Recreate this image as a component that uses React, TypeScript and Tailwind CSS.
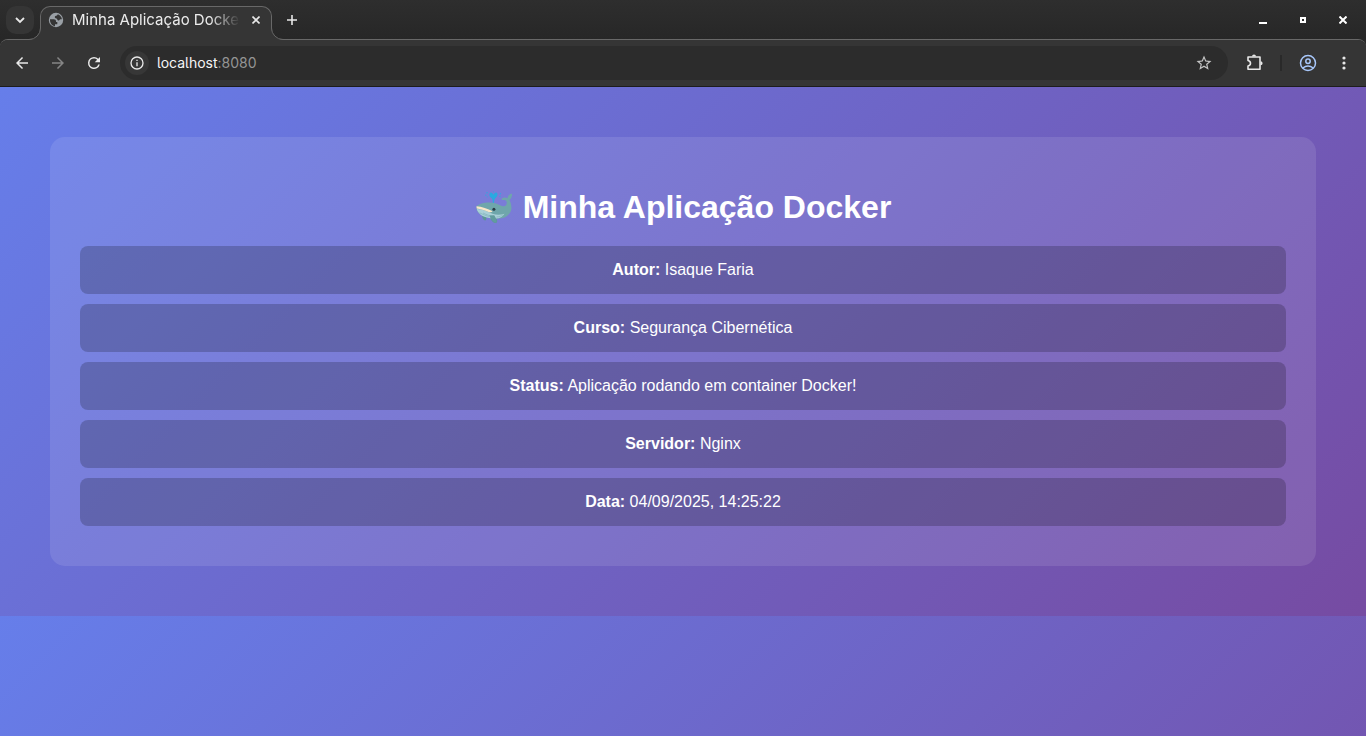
import React from "react";

const details = [
  { label: "Autor", value: "Isaque Faria" },
  { label: "Curso", value: "Segurança Cibernética" },
  { label: "Status", value: "Aplicação rodando em container Docker!" },
  { label: "Servidor", value: "Nginx" },
  { label: "Data", value: "04/09/2025, 14:25:22" },
];

type GlyphProps = { d: string; className?: string };

function Glyph({ d, className = "size-5" }: GlyphProps) {
  return (
    <svg viewBox="0 0 24 24" className={className} fill="currentColor" aria-hidden="true">
      <path d={d} />
    </svg>
  );
}

type IconButtonProps = { label: string; className?: string; children: React.ReactNode };

function IconButton({ label, className = "", children }: IconButtonProps) {
  return (
    <button type="button" aria-label={label} className={`flex shrink-0 items-center justify-center ${className}`}>
      {children}
    </button>
  );
}

function Whale() {
  return (
    <svg viewBox="0 0 40 36" className="h-9 w-10 shrink-0" role="img" aria-label="Baleia">
      <path d="M17.900 14.500C18 11 17.500 9.800 15.500 8.300C14 7 14 4 15.700 3.600C17 3.500 18 4.600 18.500 5.800C19 4.600 20 3.400 21.300 3.600C23 4 22.900 7 21.300 8.200C19.400 9.800 19 11 19 14.500Z" fill="#29a9e0" />
      <g fill="#35a5df">
        <circle cx="12" cy="3.800" r="0.800" />
        <circle cx="10.800" cy="6.300" r="0.700" />
        <circle cx="12.300" cy="7.800" r="0.600" />
        <circle cx="24.900" cy="7.500" r="0.700" />
        <circle cx="25.400" cy="4.800" r="0.700" />
        <circle cx="18.500" cy="2.800" r="0.600" />
      </g>
      <path d="M14 25C14.500 28.500 16.300 32.500 19.300 33.800C21.200 34.600 22.400 33.400 22.100 31.800C21.700 29.800 21 28 20 26Z" fill="#5b9597" />
      <path d="M7.300 26.500C7 29 8.200 31 9.900 31.500C11.300 31.600 11.500 29.500 11.300 28Z" fill="#5b9597" />
      <path d="M1.500 17.300C4 14.500 9.500 13.300 15.500 13.500C21 13.700 25 16.600 28.200 17.200C30.800 17.500 32 15.500 31.700 13.200C31.400 11.400 30 11 28.300 11.100C27 11.100 26 10.400 26.800 9.600C28.300 8.400 31 8.300 32.500 9.300C32.600 7.100 34.100 5.100 36.300 4.700C37.200 4.600 37.200 5.400 37 6.200C36.400 8.400 36.200 9.900 34.500 10.900C36.200 14.500 37.300 18.800 35.700 22.400C33.500 27.200 29 29.600 23.500 29.600C17 29.600 7 28.500 3.300 23.400C1.800 21.400.9 19 1.500 17.300Z" fill="#6fa6ab" />
      <path d="M1.900 20C8 20.200 13 22.800 17.500 24.800C21.500 26.300 26 26 29.500 24.700C27.500 28 24.500 29.600 20.500 29.500C14 29.400 7.300 28.300 4 24C2.600 22.300 1.900 21.300 1.900 20Z" fill="#a9d0d8" />
      <path d="M4.500 23.800C9 25.900 13 27.600 17.500 28.300M8 24C12 26 15.500 27.200 19.500 27.400M21.500 28C24 27.900 26 27 28 25.800" fill="none" stroke="#86b7bf" strokeWidth="0.800" />
      <path d="M14.500 26.500C15.300 29 17 32.300 19.500 33.500C21 34.200 22 33.200 21.700 31.800C21.300 29.700 20.200 27.800 19.200 26.200Z" fill="#629c9e" />
      <path d="M1.500 17.300C6.500 17.500 13 19.800 17.600 22.300C16.800 23.400 15.200 23.500 13.600 23C9.500 21.200 5 20.200 1.700 19.600Z" fill="#fae7c8" />
      <circle cx="18.900" cy="20.300" r="1.500" fill="#263b45" />
    </svg>
  );
}

function TabStrip() {
  return (
    <div className="flex h-[39px] items-start bg-linear-to-b from-[#2e2e2e] to-[#272727] pl-1.5 text-[#e8e8e8]">
      <IconButton label="Pesquisar guias" className="mt-1.5 size-7 rounded-[10px] bg-[#353535]">
        <svg viewBox="0 0 10 10" className="size-2.5" aria-hidden="true">
          <path d="M1 3L5 7L9 3" fill="none" stroke="currentColor" strokeWidth="1.800" />
        </svg>
      </IconButton>
      <div className="relative z-10 ml-1.5 mt-1.5 flex h-[34px] w-[232px] items-start rounded-t-[10px] border border-b-0 border-[#686868] bg-[#353535] pl-[7px]">
        <svg viewBox="0 0 12 12" className="absolute -left-3 bottom-0 size-3" aria-hidden="true">
          <path d="M12 0V12H0V11.500A11.500 11.500 0 0 0 11.500 0Z" fill="#353535" />
          <path d="M0 11.500A11.500 11.500 0 0 0 11.500 0" fill="none" stroke="#686868" />
        </svg>
        <svg viewBox="0 0 12 12" className="absolute -right-3 bottom-0 size-3" aria-hidden="true">
          <path d="M0 0V12H12V11.500A11.500 11.500 0 0 1 .5 0Z" fill="#353535" />
          <path d="M12 11.500A11.500 11.500 0 0 1 .5 0" fill="none" stroke="#686868" />
        </svg>
        <svg viewBox="0 0 16 16" className="mt-[5px] size-4 shrink-0" aria-hidden="true">
          <circle cx="8" cy="8" r="7.200" fill="#9aa0a6" />
          <path d="M2 7.200H5.800C7.300 7.200 8 8 8 9.200V10H9.300V12.300H7V14.300C4.300 13.800 2 11.200 2 8ZM9.800 2.300C12 3 13.600 5 13.900 7.200H12.500C11.500 7.200 11.400 8.600 10.300 8.600C9.200 8.600 9.600 6.900 8.500 6.500C7.200 6.100 6.500 5.500 6.900 4.500C7.200 3.700 9.300 3.900 9.800 2.300Z" fill="#353535" />
        </svg>
        <span className="ml-2 mt-[3px] w-[168px] overflow-hidden whitespace-nowrap text-[15px] leading-5 text-[#ececec] [mask-image:linear-gradient(to_right,black_82%,transparent)]">
          Minha Aplicação Docker
        </span>
        <IconButton label="Fechar guia" className="ml-2 mt-[5px] size-4">
          <svg viewBox="0 0 8 8" className="size-2" aria-hidden="true">
            <path d="M.5.5L7.500 7.500M7.500.5L.5 7.500" stroke="currentColor" strokeWidth="1.600" />
          </svg>
        </IconButton>
      </div>
      <IconButton label="Nova guia" className="ml-1.5 mt-1.5 size-7">
        <svg viewBox="0 0 10 10" className="size-2.5" aria-hidden="true">
          <path d="M5 0V10M0 5H10" stroke="currentColor" strokeWidth="1.600" />
        </svg>
      </IconButton>
      <div className="ml-auto mt-2.5 mr-[13px] flex gap-5 text-white">
        <IconButton label="Minimizar" className="size-5">
          <svg viewBox="0 0 10 10" className="size-2.5" aria-hidden="true">
            <path d="M1 7H9V9H1Z" fill="currentColor" />
          </svg>
        </IconButton>
        <IconButton label="Maximizar" className="size-5">
          <svg viewBox="0 0 6 6" className="size-1.5" aria-hidden="true">
            <path d="M1 1H5V5H1Z" fill="none" stroke="currentColor" strokeWidth="2" />
          </svg>
        </IconButton>
        <IconButton label="Fechar" className="size-5">
          <svg viewBox="0 0 8 8" className="size-2" aria-hidden="true">
            <path d="M.5.5L7.500 7.500M7.500.5L.5 7.500" stroke="currentColor" strokeWidth="2" />
          </svg>
        </IconButton>
      </div>
    </div>
  );
}

function Toolbar() {
  return (
    <div className="flex h-[47px] items-center border-b border-[#1d1d1d] bg-[#353535] px-2 text-[#e8e8e8]">
      <IconButton label="Voltar" className="size-7">
        <Glyph className="size-[18px]" d="M20 11H7.830l5.590-5.590L12 4l-8 8 8 8 1.410-1.410L7.830 13H20v-2z" />
      </IconButton>
      <IconButton label="Avançar" className="ml-2 size-7 text-[#858585]">
        <Glyph className="size-[18px]" d="M12 4l-1.410 1.410L16.170 11H4v2h12.170l-5.580 5.590L12 20l8-8z" />
      </IconButton>
      <IconButton label="Recarregar" className="ml-2 size-7">
        <Glyph
          className="size-[18px]"
          d="M17.650 6.350A7.960 7.960 0 0 0 12 4a8 8 0 1 0 7.730 10h-2.080A6 6 0 1 1 12 6c1.660 0 3.140.69 4.220 1.780L13 11h7V4l-2.350 2.350z"
        />
      </IconButton>
      <div className="ml-3 flex h-[34px] min-w-0 flex-1 items-center rounded-full bg-[#2c2c2c] pl-[5px] pr-2.5">
        <IconButton label="Ver informações do site" className="size-6 rounded-full bg-[#373737]">
          <Glyph
            className="size-4"
            d="M11 17h2v-6h-2v6zm0-8h2V7h-2v2zm1-7a10 10 0 1 0 0 20 10 10 0 0 0 0-20zm0 18a8 8 0 1 1 0-16 8 8 0 0 1 0 16z"
          />
        </IconButton>
        <a href="http://localhost:8080" className="ml-2 text-sm leading-5 text-[#f5f5f5] [font-feature-settings:'cv05']">
          localhost<span className="text-[#959595]">:8080</span>
        </a>
        <IconButton label="Adicionar aos favoritos" className="ml-auto size-7 text-[#c4c4c4]">
          <Glyph
            className="size-[18px]"
            d="M22 9.240l-7.190-.62L12 2 9.190 8.630 2 9.240l5.460 4.730L5.820 21 12 17.270 18.180 21l-1.630-7.030L22 9.240zM12 15.400l-3.760 2.270 1-4.280-3.320-2.880 4.380-.38L12 6.100l1.710 4.040 4.380.38-3.320 2.880 1 4.280L12 15.400z"
          />
        </IconButton>
      </div>
      <IconButton label="Extensões" className="ml-3 size-7">
        <svg viewBox="0 0 18 18" className="size-[18px]" aria-hidden="true">
          <path d="M3 3H15V15.300H3V12Q5.500 11.500 5.500 9.300T3 6.500Z" fill="none" stroke="currentColor" strokeWidth="1.600" strokeLinejoin="round" />
          <path d="M7 2.600a2 2.100 0 0 1 4 0ZM15.500 7.200a2.100 2 0 0 1 0 4Z" fill="currentColor" />
        </svg>
      </IconButton>
      <div className="ml-3 h-4 w-0.5 bg-[#292929]" />
      <IconButton label="Perfil" className="ml-3 size-7 text-[#a8c7fa]">
        <svg viewBox="0 0 18 18" className="size-[18px]" fill="none" stroke="currentColor" strokeWidth="1.500" aria-hidden="true">
          <circle cx="9" cy="9" r="7.500" />
          <circle cx="9" cy="7.200" r="2.200" />
          <path d="M3.800 14Q9 9.800 14.200 14" />
        </svg>
      </IconButton>
      <IconButton label="Menu" className="ml-2 size-7">
        <svg viewBox="0 0 4 14" className="h-3.5 w-1" fill="currentColor" aria-hidden="true">
          <circle cx="2" cy="2" r="1.600" />
          <circle cx="2" cy="7" r="1.600" />
          <circle cx="2" cy="12" r="1.600" />
        </svg>
      </IconButton>
    </div>
  );
}

export default function App() {
  return (
    <div className="flex min-h-screen flex-col bg-[#282828]">
      <header className="font-['Inter',sans-serif]">
        <TabStrip />
        <div className="overflow-hidden rounded-t-[8px] border-t border-[#686868] bg-[#353535]">
          <Toolbar />
        </div>
      </header>
      <main className="flex-1 bg-[linear-gradient(135deg,#667eea_0%,#764ba2_100%)] bg-[length:100%_529px] p-[50px] text-center font-['Liberation_Sans',Arial,sans-serif] text-base text-white">
        <div className="rounded-[15px] bg-white/10 px-[30px] pt-[51px] pb-10">
          <h1 className="flex items-center justify-center gap-2 text-[32px] leading-[38px] font-bold">
            <Whale />
            Minha Aplicação Docker
          </h1>
          <div className="mt-5 flex flex-col gap-2.5">
            {details.map((item) => (
              <p key={item.label} className="rounded-lg bg-black/20 p-[15px] leading-[18px]">
                <strong>{item.label}:</strong> {item.value}
              </p>
            ))}
          </div>
        </div>
      </main>
    </div>
  );
}
